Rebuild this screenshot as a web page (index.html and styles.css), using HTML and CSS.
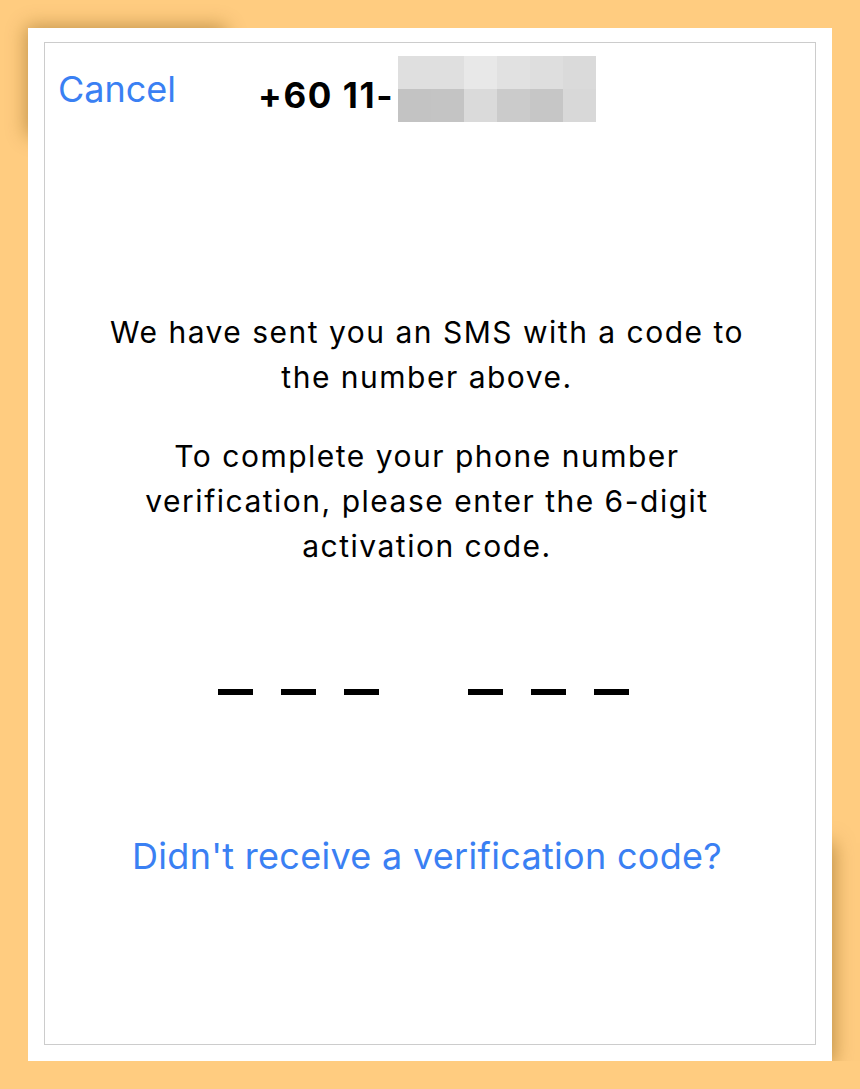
FILE: index.html
```html
<!DOCTYPE html>
<html lang="en">
<head>
<meta charset="utf-8">
<title>Verify phone number</title>
<link rel="stylesheet" href="styles.css">
</head>
<body>
<div class="card">
  <div class="screen">
    <header class="header">
      <span class="cancel">Cancel</span>
      <span class="phone">
        <span class="phone-text">+60 11-</span>
        <span class="mosaic" aria-hidden="true">
          <i style="background:#dfdfdf"></i><i style="background:#dfdfdf"></i><i style="background:#e8e8e8"></i><i style="background:#e1e1e1"></i><i style="background:#dedede"></i><i style="background:#dadada"></i>
          <i style="background:#c3c3c3"></i><i style="background:#c4c4c4"></i><i style="background:#dadada"></i><i style="background:#cbcbcb"></i><i style="background:#c6c6c6"></i><i style="background:#d8d8d8"></i>
        </span>
      </span>
    </header>
    <main class="content">
      <p class="msg first">We have sent you an SMS with a code to<br>the number above.</p>
      <p class="msg">To complete your phone number<br>verification, please enter the 6-digit<br>activation code.</p>
      <div class="code">
        <div class="group"><span class="dash"></span><span class="dash"></span><span class="dash"></span></div>
        <div class="group"><span class="dash"></span><span class="dash"></span><span class="dash"></span></div>
      </div>
      <p class="resend">Didn't receive a verification code?</p>
    </main>
  </div>
</div>
</body>
</html>
```

FILE: styles.css
```css
html, body {
  margin: 0;
  padding: 0;
}
body {
  background: #ffcc80;
  font-family: Inter, "Liberation Sans", Arial, sans-serif;
  color: #000;
}
.card {
  position: relative;
  margin: 28px 0 0 28px;
  width: 804px;
  height: 1033px;
  box-sizing: border-box;
  padding: 14px 16px 16px 16px;
  background: #fff;
}
.card::before,
.card::after {
  content: "";
  position: absolute;
  z-index: -1;
  background: transparent;
}
.card::before {
  left: 6px;
  top: 6px;
  width: 200px;
  height: 110px;
  box-shadow: -8px -8px 18px rgba(120, 80, 10, 0.45);
}
.card::after {
  right: 6px;
  bottom: 6px;
  width: 260px;
  height: 220px;
  box-shadow: 8px 8px 18px rgba(120, 80, 10, 0.5);
}
.screen {
  height: 100%;
  box-sizing: border-box;
  border: 1px solid #cccccc;
  display: flex;
  flex-direction: column;
}
.header {
  display: flex;
  align-items: center;
  padding: 13px 0 0 13px;
  height: 66px;
}
.cancel {
  font-size: 36px;
  color: #3a80f3;
}
.phone {
  display: flex;
  align-items: center;
  margin-left: 82px;
}
.phone-text {
  font-size: 35px;
  font-weight: 700;
  letter-spacing: 1.6px;
  padding-top: 12px;
}
.mosaic {
  display: grid;
  grid-template-columns: repeat(6, 33px);
  grid-template-rows: 33px 33px;
  margin-left: 4px;
}
.mosaic i {
  display: block;
}
.content {
  display: flex;
  flex-direction: column;
  align-items: center;
  padding-right: 6px;
}
.msg {
  margin: 34px 0 0 0;
  font-size: 30px;
  line-height: 45px;
  letter-spacing: 1.5px;
  text-align: center;
}
.msg.first {
  margin-top: 188px;
}
.code {
  display: flex;
  gap: 89px;
  margin: 120px 8px 0 0;
}
.group {
  display: flex;
  gap: 28px;
}
.dash {
  display: block;
  width: 35px;
  height: 6px;
  background: #000;
}
.resend {
  margin: 139px 0 0 0;
  font-size: 36px;
  line-height: 44px;
  letter-spacing: 0.3px;
  color: #3a80f3;
  text-align: center;
}
```
